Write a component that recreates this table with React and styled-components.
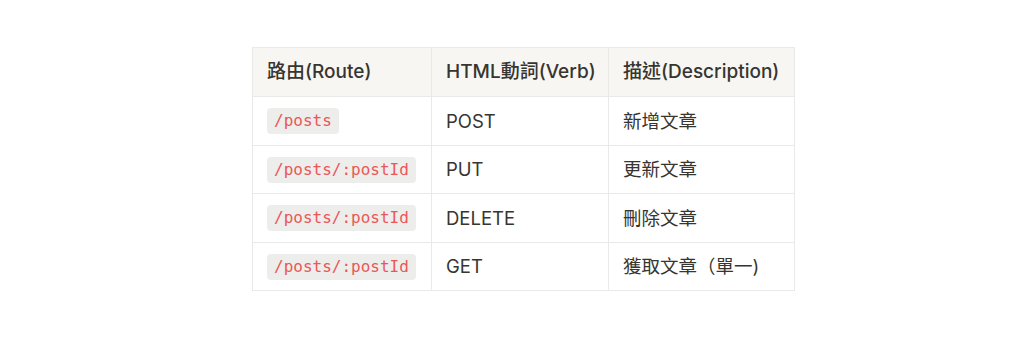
import styled, { createGlobalStyle } from "styled-components";

const GlobalStyle = createGlobalStyle`
  html, body {
    margin: 0;
    background: #fff;
  }
  body {
    font-family: Inter, "Noto Sans CJK TC", sans-serif;
    color: #37352f;
  }
`;

const rows = [
  { route: "/posts", verb: "POST", desc: "新增文章" },
  { route: "/posts/:postId", verb: "PUT", desc: "更新文章" },
  { route: "/posts/:postId", verb: "DELETE", desc: "刪除文章" },
  { route: "/posts/:postId", verb: "GET", desc: "獲取文章（單一)" },
];

const App = () => {
  return (
    <Page>
      <GlobalStyle />
      <Table>
        <colgroup>
          <col style={{ width: 179 }} />
          <col style={{ width: 177 }} />
          <col style={{ width: 186 }} />
        </colgroup>
        <thead>
          <tr>
            <Th>路由(Route)</Th>
            <Th>HTML動詞(Verb)</Th>
            <Th>描述(Description)</Th>
          </tr>
        </thead>
        <tbody>
          {rows.map((r, i) => (
            <tr key={i}>
              <Td>
                <Code>{r.route}</Code>
              </Td>
              <Td>{r.verb}</Td>
              <Td>{r.desc}</Td>
            </tr>
          ))}
        </tbody>
      </Table>
    </Page>
  );
};

export default App;

const Page = styled.div`
  display: flex;
  padding: 47px 0 0 252px;
`;

const Table = styled.table`
  border-collapse: collapse;
  table-layout: fixed;
  width: 542px;
`;

const Th = styled.th`
  height: 48px;
  padding: 0 14px;
  background: #f7f6f3;
  border: 1px solid #e9e9e7;
  text-align: left;
  font-weight: 500;
  font-size: 19px;
  line-height: 24px;
  white-space: nowrap;
`;

const Td = styled.td`
  height: 47.5px;
  padding: 0 14px;
  border: 1px solid #e9e9e7;
  text-align: left;
  font-size: 18.5px;
  line-height: 24px;
  white-space: nowrap;
`;

const Code = styled.span`
  display: inline-block;
  vertical-align: middle;
  padding: 0 7px;
  line-height: 26px;
  border-radius: 4px;
  background: rgba(135, 131, 120, 0.15);
  color: #eb5757;
  font-family: "DejaVu Sans Mono", "Liberation Mono", monospace;
  font-size: 16px;
`;
